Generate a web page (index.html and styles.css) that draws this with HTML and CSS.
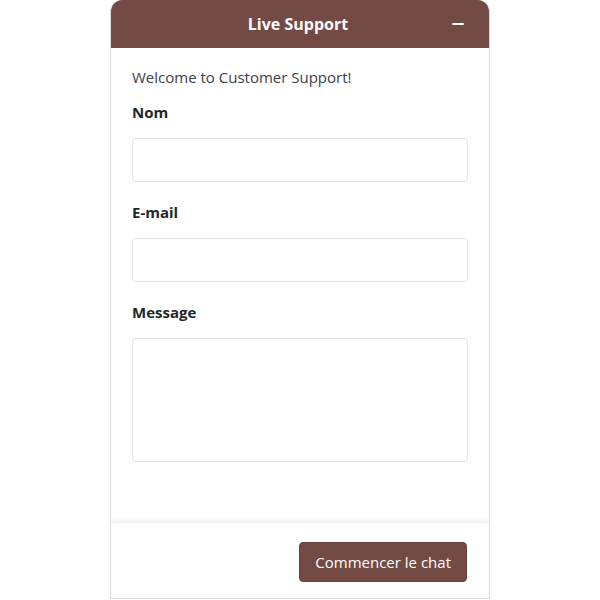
FILE: index.html
```html
<!DOCTYPE html>
<html>
<head>
<meta charset="utf-8">
<link rel="stylesheet" href="styles.css">
</head>
<body>
<div class="widget">
  <div class="header">
    <span></span>
    <span class="title">Live Support</span>
    <button class="minimize" aria-label="Minimize"><span class="bar"></span></button>
  </div>
  <div class="body">
    <p class="welcome">Welcome to Customer Support!</p>
    <label class="label">Nom</label>
    <input class="field" type="text">
    <label class="label">E-mail</label>
    <input class="field" type="email">
    <label class="label">Message</label>
    <textarea class="field area"></textarea>
  </div>
  <div class="footer">
    <button class="start">Commencer le chat</button>
  </div>
</div>
</body>
</html>
```

FILE: styles.css
```css
html, body {
  margin: 0;
  padding: 0;
  background: #ffffff;
}
body {
  font-family: "Open Sans", "Noto Sans", sans-serif;
  color: #2b2f33;
}
.widget {
  width: 380px;
  height: 599px;
  margin: 0 auto;
  display: flex;
  flex-direction: column;
  border: 1px solid #dcdcdc;
  border-top: none;
  border-radius: 12px 12px 0 0;
  box-sizing: border-box;
  overflow: hidden;
}
.header {
  height: 48px;
  flex: none;
  background: #744a44;
  display: grid;
  grid-template-columns: 1fr auto 1fr;
  align-items: center;
  color: #fff;
}
.title {
  font-weight: 700;
  font-size: 16px;
  margin-left: -4px;
}
.minimize {
  justify-self: end;
  margin-right: 25px;
  background: none;
  border: none;
  padding: 4px 0;
  display: flex;
  cursor: pointer;
}
.bar {
  width: 12px;
  height: 2px;
  background: #fff;
  border-radius: 1px;
}
.body {
  flex: 1;
  padding: 19px 21px 0 21px;
  display: flex;
  flex-direction: column;
}
.welcome {
  margin: 0 0 15px;
  font-size: 15px;
  color: #3d4246;
}
.label {
  font-weight: 700;
  font-size: 15px;
  color: #22272b;
  margin-bottom: 16px;
}
.field {
  height: 44px;
  border: 1px solid #e3e3e3;
  border-radius: 4px;
  box-sizing: border-box;
  margin-bottom: 20px;
  font: inherit;
}
.area {
  height: 124px;
  resize: none;
}
.footer {
  height: 76px;
  flex: none;
  box-shadow: 0 -3px 6px rgba(0,0,0,0.05);
  border-top: 1px solid #eeeeee;
  display: flex;
  justify-content: flex-end;
  align-items: flex-start;
  padding: 19px 22px 0 0;
  box-sizing: border-box;
}
.start {
  height: 40px;
  padding: 0 15px;
  background: #744a44;
  color: #fff;
  border: 1px solid #6a403b;
  border-radius: 4px;
  font-family: "Open Sans", sans-serif;
  font-size: 15px;
}
```
